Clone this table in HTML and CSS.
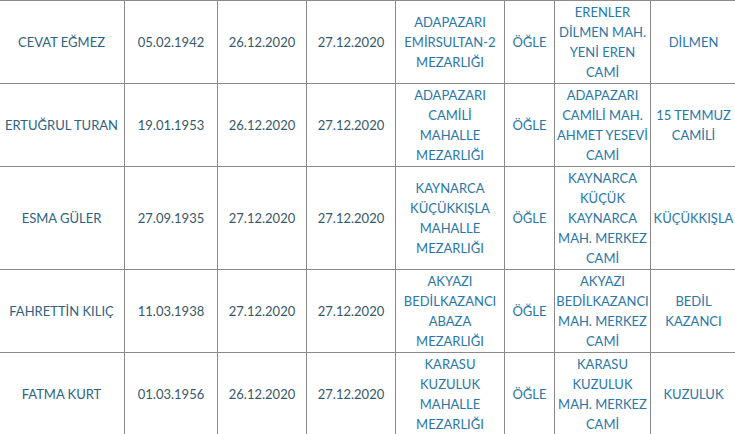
FILE: index.html
```html
<!DOCTYPE html>
<html lang="tr">
<head>
<meta charset="utf-8">
<link rel="stylesheet" href="styles.css">
</head>
<body>
<table class="list">
  <colgroup>
    <col class="c-name"><col class="c-date"><col class="c-date2"><col class="c-date2"><col class="c-place"><col class="c-time"><col class="c-mosque"><col class="c-dist">
  </colgroup>
  <tbody>
    <tr>
      <td class="name">CEVAT EĞMEZ</td>
      <td class="date">05.02.1942</td>
      <td class="date">26.12.2020</td>
      <td class="date">27.12.2020</td>
      <td class="info">ADAPAZARI EMİRSULTAN-2 MEZARLIĞI</td>
      <td class="info">ÖĞLE</td>
      <td class="info">ERENLER DİLMEN MAH. YENİ EREN CAMİ</td>
      <td class="info">DİLMEN</td>
    </tr>
    <tr>
      <td class="name">ERTUĞRUL TURAN</td>
      <td class="date">19.01.1953</td>
      <td class="date">26.12.2020</td>
      <td class="date">27.12.2020</td>
      <td class="info">ADAPAZARI CAMİLİ MAHALLE MEZARLIĞI</td>
      <td class="info">ÖĞLE</td>
      <td class="info">ADAPAZARI CAMİLİ MAH. AHMET YESEVİ CAMİ</td>
      <td class="info">15 TEMMUZ CAMİLİ</td>
    </tr>
    <tr>
      <td class="name">ESMA GÜLER</td>
      <td class="date">27.09.1935</td>
      <td class="date">27.12.2020</td>
      <td class="date">27.12.2020</td>
      <td class="info">KAYNARCA KÜÇÜKKIŞLA MAHALLE MEZARLIĞI</td>
      <td class="info">ÖĞLE</td>
      <td class="info">KAYNARCA KÜÇÜK KAYNARCA MAH. MERKEZ CAMİ</td>
      <td class="info">KÜÇÜKKIŞLA</td>
    </tr>
    <tr>
      <td class="name">FAHRETTİN KILIÇ</td>
      <td class="date">11.03.1938</td>
      <td class="date">27.12.2020</td>
      <td class="date">27.12.2020</td>
      <td class="info">AKYAZI BEDİLKAZANCI ABAZA MEZARLIĞI</td>
      <td class="info">ÖĞLE</td>
      <td class="info">AKYAZI BEDİLKAZANCI MAH. MERKEZ CAMİ</td>
      <td class="info">BEDİL KAZANCI</td>
    </tr>
    <tr>
      <td class="name">FATMA KURT</td>
      <td class="date">01.03.1956</td>
      <td class="date">26.12.2020</td>
      <td class="date">27.12.2020</td>
      <td class="info">KARASU KUZULUK MAHALLE MEZARLIĞI</td>
      <td class="info">ÖĞLE</td>
      <td class="info">KARASU KUZULUK MAH. MERKEZ CAMİ</td>
      <td class="info">KUZULUK</td>
    </tr>
  </tbody>
</table>
</body>
</html>
```
FILE: styles.css
```css
html, body {
  margin: 0;
  padding: 0;
  background: #ffffff;
}
body {
  overflow: hidden;
  font-family: Lato, "Open Sans", "Liberation Sans", sans-serif;
  font-size: 13px;
  line-height: 20px;
}
.list {
  border-collapse: collapse;
  table-layout: fixed;
  width: 738px;
  margin-left: -2px;
}
.c-name { width: 126px; }
.c-date { width: 93px; }
.c-date2 { width: 89px; }
.c-place { width: 109px; }
.c-time { width: 50px; }
.c-mosque { width: 96px; }
.c-dist { width: 86px; }
.list td {
  border: 1px solid #8a8a8a;
  padding: 1px 1px;
  text-align: center;
  vertical-align: middle;
}
.list td.name { color: #2f6282; }
.list td.date { color: #37576b; }
.list td.info { color: #2a76a8; }
```
